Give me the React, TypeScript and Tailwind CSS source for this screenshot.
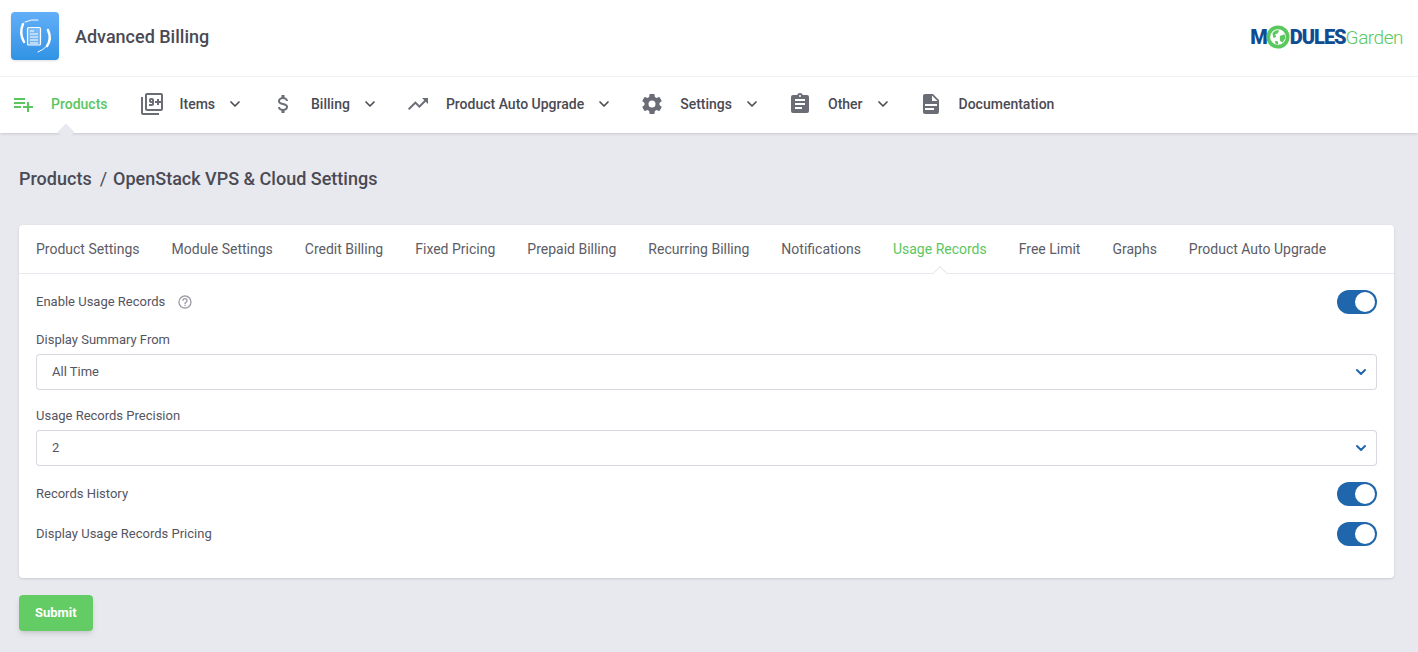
import { ChevronDown } from 'lucide-react'

const icons: Record<string, string> = {
  products: 'M3 16H10V14H3M18 14V10H16V14H12V16H16V20H18V16H22V14M14 6H3V8H14M14 10H3V12H14V10Z',
  items: 'M3 5H1v16c0 1.1.9 2 2 2h16v-2H3V5zm11 7V8c0-1.1-.9-2-2-2h-1c-1.1 0-2 .9-2 2v1c0 1.1.9 2 2 2h1v1H9v2h3c1.1 0 2-.9 2-2zm-3-3V8h1v1h-1zm10-8H7c-1.1 0-2 .9-2 2v14c0 1.1.9 2 2 2h14c1.1 0 2-.9 2-2V3c0-1.1-.9-2-2-2zm0 8h-2V7h-2v2h-2v2h2v2h2v-2h2v6H7V3h14v6z',
  billing: 'M7,15H9C9,16.08 10.37,17 12,17C13.63,17 15,16.08 15,15C15,13.9 13.96,13.5 11.76,12.97C9.64,12.44 7,11.78 7,9C7,7.21 8.47,5.69 10.5,5.18V3H13.5V5.18C15.53,5.69 17,7.21 17,9H15C15,7.92 13.63,7 12,7C10.37,7 9,7.92 9,9C9,10.1 10.04,10.5 12.24,11.03C14.36,11.56 17,12.22 17,15C17,16.79 15.53,18.31 13.5,18.82V21H10.5V18.82C8.47,18.31 7,16.79 7,15Z',
  upgrade: 'M16,6L18.29,8.29L13.41,13.17L9.41,9.17L2,16.59L3.41,18L9.41,12L13.41,16L19.71,9.71L22,12V6H16Z',
  settings: 'M12,15.5A3.5,3.5 0 0,1 8.5,12A3.5,3.5 0 0,1 12,8.5A3.5,3.5 0 0,1 15.5,12A3.5,3.5 0 0,1 12,15.5M19.43,12.97C19.47,12.65 19.5,12.33 19.5,12C19.5,11.67 19.47,11.34 19.43,11L21.54,9.37C21.73,9.22 21.78,8.95 21.66,8.73L19.66,5.27C19.54,5.05 19.27,4.96 19.05,5.05L16.56,6.05C16.04,5.66 15.5,5.32 14.87,5.07L14.5,2.42C14.46,2.18 14.25,2 14,2H10C9.75,2 9.54,2.18 9.5,2.42L9.13,5.07C8.5,5.32 7.96,5.66 7.44,6.05L4.95,5.05C4.73,4.96 4.46,5.05 4.34,5.27L2.34,8.73C2.21,8.95 2.27,9.22 2.46,9.37L4.57,11C4.53,11.34 4.5,11.67 4.5,12C4.5,12.33 4.53,12.65 4.57,12.97L2.46,14.63C2.27,14.78 2.21,15.05 2.34,15.27L4.34,18.73C4.46,18.95 4.73,19.03 4.95,18.95L7.44,17.94C7.96,18.34 8.5,18.68 9.13,18.93L9.5,21.58C9.54,21.82 9.75,22 10,22H14C14.25,22 14.46,21.82 14.5,21.58L14.87,18.93C15.5,18.67 16.04,18.34 16.56,17.94L19.05,18.95C19.27,19.03 19.54,18.95 19.66,18.73L21.66,15.27C21.78,15.05 21.73,14.78 21.54,14.63L19.43,12.97Z',
  other: 'M17,9H7V7H17M17,13H7V11H17M14,17H7V15H14M12,3A1,1 0 0,1 13,4A1,1 0 0,1 12,5A1,1 0 0,1 11,4A1,1 0 0,1 12,3M19,3H14.82C14.4,1.84 13.3,1 12,1C10.7,1 9.6,1.84 9.18,3H5A2,2 0 0,0 3,5V19A2,2 0 0,0 5,21H19A2,2 0 0,0 21,19V5A2,2 0 0,0 19,3Z',
  docs: 'M13,9H18.5L13,3.5V9M6,2H14L20,8V20A2,2 0 0,1 18,22H6C4.89,22 4,21.1 4,20V4C4,2.89 4.9,2 6,2M15,18V16H6V18H15M18,14V12H6V14H18Z',
}

const navItems = [
  { icon: 'items', label: 'Items', menu: true },
  { icon: 'billing', label: 'Billing', menu: true },
  { icon: 'upgrade', label: 'Product Auto Upgrade', menu: true },
  { icon: 'settings', label: 'Settings', menu: true },
  { icon: 'other', label: 'Other', menu: true },
  { icon: 'docs', label: 'Documentation', menu: false },
]

const tabs = ['Product Settings', 'Module Settings', 'Credit Billing', 'Fixed Pricing', 'Prepaid Billing', 'Recurring Billing', 'Notifications', 'Usage Records', 'Free Limit', 'Graphs', 'Product Auto Upgrade']

const labelText = 'text-[13px] text-[#55555f]'

const NavIcon = ({ name, className }: { name: string; className: string }) => (
  <svg viewBox="0 0 24 24" className={`w-6 h-6 fill-current shrink-0 ${className}`}>
    <path d={icons[name]} />
  </svg>
)

const Toggle = () => (
  <div className="w-10 h-6 rounded-full bg-[#2066ad] flex items-center justify-end p-0.5">
    <div className="w-5 h-5 rounded-full bg-white" />
  </div>
)

const Select = ({ value }: { value: string }) => (
  <div className="h-9 flex items-center justify-between pl-4 pr-2 bg-white ring-1 ring-inset ring-[#d8d8e2] rounded">
    <span className={labelText}>{value}</span>
    <ChevronDown className="w-4 h-4 text-[#2066ad]" strokeWidth={3} />
  </div>
)

const Logo = () => (
  <div className="flex items-center">
    <span className="text-xl leading-none font-black text-[#0f4c92] tracking-tighter">M</span>
    <svg viewBox="0 0 26 26" className="w-6 h-6 shrink-0 -ml-px">
      <circle cx="13" cy="13" r="10.5" fill="#fff" stroke="#5ac85e" strokeWidth="4" />
      <path d="M7 9c2-3 5-4 7-3l-1 3-3 1 1 3-3 1zM15 12l5-2 1 4-3 5-3-2zM10 17l3 1 0 3-3-1z" fill="#5ac85e" />
    </svg>
    <span className="text-xl leading-none font-black text-[#0f4c92] tracking-tighter">DULES</span>
    <span className="text-[19px] leading-none font-light text-[#5ac85e] tracking-tight">Garden</span>
  </div>
)

export default function App() {
  return (
    <div className="min-h-screen bg-[#e8e9ef] font-['Roboto',sans-serif]">
      {/* Header */}
      <div className="h-[77px] pb-0.5 bg-white border-b border-gray-100 flex items-center justify-between pl-[11px] pr-[15px]">
        <div className="flex items-center gap-4">
          <div className="w-12 h-12 mb-0.5 rounded bg-linear-to-b from-[#62aef8] to-[#3093e4] shadow-sm">
            <svg viewBox="0 0 48 48" className="w-12 h-12 text-white">
              <rect x="16.5" y="15.5" width="13" height="17.5" rx="1" fill="#fff" fillOpacity="0.25" stroke="currentColor" strokeWidth="1.2" />
              <path d="M19 19h4M19 22h8M19 25h8M19 28h8M19 31h8" stroke="currentColor" strokeWidth="1" />
              <path d="M12 12Q8 21 13 30M37 18Q41 27 36 34" fill="none" stroke="currentColor" strokeWidth="2.5" strokeLinecap="round" />
              <path d="M14 10Q20 7 27 8M36 34Q32 38 27 40" fill="none" stroke="currentColor" strokeWidth="1" strokeLinecap="round" />
            </svg>
          </div>
          <span className="text-lg font-medium text-[#4a4a54]">Advanced Billing</span>
        </div>
        <Logo />
      </div>

      {/* Nav */}
      <div className="relative h-14 pb-0.5 bg-white shadow-sm flex items-center pl-[11px] text-sm font-medium text-[#4a4a54]">
        <div className="flex items-center gap-4 text-[#5bc65f] mr-8">
          <NavIcon name="products" className="" />
          <span>Products</span>
        </div>
        <div className="flex items-center gap-6">
          {navItems.map(item => (
            <div key={item.label} className="flex items-center gap-2">
              <div className="flex items-center gap-4">
                <NavIcon name={item.icon} className="text-[#6b6d76]" />
                <span>{item.label}</span>
              </div>
              {item.menu && <ChevronDown className="w-6 h-4 text-[#4a4a54]" strokeWidth={2.5} />}
            </div>
          ))}
        </div>
        <div className="absolute left-[60px] bottom-[-5px] w-3 h-3 rotate-45 bg-[#e8e9ef]" />
      </div>

      {/* Page */}
      <div className="pl-[19px] pr-6 pt-9">
        <div className="flex items-center gap-2 text-lg font-medium text-[#4a4a54] h-5">
          <span>Products</span>
          <span className="font-normal -mr-0.5">/</span>
          <span>OpenStack VPS &amp; Cloud Settings</span>
        </div>

        <div className="mt-9 bg-white rounded shadow-sm">
          <div className="relative h-[49px] flex items-center gap-8 px-[17px] border-b border-[#e8e9ef] text-sm text-[#5c5c66]">
            {tabs.map(tab => (
              <span key={tab} className={tab === 'Usage Records' ? 'text-[#5bc65f]' : ''}>{tab}</span>
            ))}
            <div className="absolute left-[916px] bottom-[-5px] w-2.5 h-2.5 rotate-45 bg-white border-l border-t border-[#e8e9ef]" />
          </div>

          <div className="px-[17px] pt-4 pb-8">
            <div className="h-6 flex items-center justify-between">
              <div className="flex items-center gap-3">
                <span className={labelText}>Enable Usage Records</span>
                <svg viewBox="0 0 24 24" className="w-4 h-4 fill-current text-[#9a9ba3]">
                  <path d="M11,18H13V16H11V18M12,2A10,10 0 0,0 2,12A10,10 0 0,0 12,22A10,10 0 0,0 22,12A10,10 0 0,0 12,2M12,20C7.59,20 4,16.41 4,12C4,7.59 7.59,4 12,4C16.41,4 20,7.59 20,12C20,16.41 16.41,20 12,20M12,6A4,4 0 0,0 8,10H10A2,2 0 0,1 12,8A2,2 0 0,1 14,10C14,12 11,11.75 11,15H13C13,12.75 16,12.5 16,10A4,4 0 0,0 12,6Z" />
                </svg>
              </div>
              <Toggle />
            </div>

            <div className={`${labelText} mt-4 mb-1 h-5 flex items-center`}>Display Summary From</div>
            <Select value="All Time" />

            <div className={`${labelText} mt-4 mb-1 h-5 flex items-center`}>Usage Records Precision</div>
            <Select value="2" />

            <div className="mt-4 h-6 flex items-center justify-between">
              <span className={labelText}>Records History</span>
              <Toggle />
            </div>
            <div className="mt-4 h-6 flex items-center justify-between">
              <span className={labelText}>Display Usage Records Pricing</span>
              <Toggle />
            </div>
          </div>
        </div>

        <button className="mt-[17px] h-9 px-4 bg-[#63cc64] text-white text-[13px] font-bold rounded shadow-md">Submit</button>
      </div>
    </div>
  )
}
